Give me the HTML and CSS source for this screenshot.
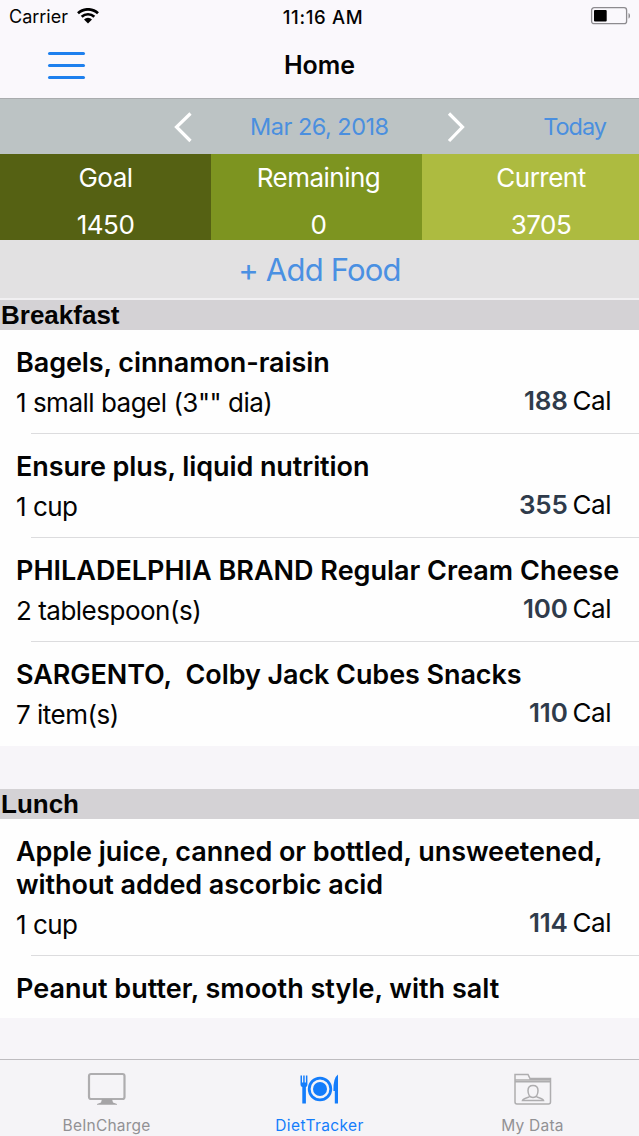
FILE: index.html
```html
<!DOCTYPE html>
<html lang="en">
  <head>
    <meta charset="UTF-8" />
    <meta name="viewport" content="width=device-width, initial-scale=1.0" />
    <title>Home</title>
    <link rel="stylesheet" href="styles.css">
  </head>
  <body>
    <header class="top">
      <div class="status">
        <div class="carrier">
          <span>Carrier</span>
          <svg width="22" height="16" viewBox="0 0 22 16">
            <path d="M1 5.300a14.500 14.500 0 0 1 20 0M4.700 8.800a9.100 9.100 0 0 1 12.600 0" fill="none" stroke="#000" stroke-width="2.700" />
            <path d="M7 11.400a5.800 5.800 0 0 1 8 0l-4 4z" />
          </svg>
        </div>
        <div class="time">11:16 AM</div>
        <div class="battery">
          <svg width="41" height="18" viewBox="0 0 41 18">
            <rect x="1.600" y="0.700" width="35" height="16" rx="2.500" fill="none" stroke="#8d8b8f" stroke-width="1.300" />
            <rect x="4" y="3" width="12.700" height="11.500" rx="1" />
            <path d="M38.500 6c2 .8 2 4.800 0 5.600z" fill="#8d8b8f" />
          </svg>
        </div>
      </div>
      <nav class="navbar">
        <button class="menu"><i></i><i></i><i></i></button>
        <h1>Home</h1>
      </nav>
    </header>
    <div class="datebar">
      <svg class="prev" width="20" height="32" viewBox="0 0 20 32"><path d="M17.500 2.500L3.500 16L17.500 30" /></svg>
      <span class="date">Mar 26, 2018</span>
      <svg class="next" width="20" height="32" viewBox="0 0 20 32"><path d="M3 2.500L16.500 16L3 30" /></svg>
      <span class="today">Today</span>
    </div>
    <div class="totals">
      <div class="goal"><span class="label">Goal</span><span class="num">1450</span></div>
      <div class="remaining"><span class="label">Remaining</span><span class="num">0</span></div>
      <div class="current"><span class="label">Current</span><span class="num">3705</span></div>
    </div>
    <div class="add"><span>+ Add Food</span></div>
    <main class="list">
      <section>
        <h2>Breakfast</h2>
        <div class="food">
          <h3>Bagels, cinnamon-raisin</h3>
          <div class="info"><span>1 small bagel (3"" dia)</span><span class="cal"><b>188</b>Cal</span></div>
        </div>
        <div class="food">
          <h3>Ensure plus, liquid nutrition</h3>
          <div class="info"><span>1 cup</span><span class="cal"><b>355</b>Cal</span></div>
        </div>
        <div class="food">
          <h3 class="wide">PHILADELPHIA BRAND Regular Cream Cheese</h3>
          <div class="info"><span>2 tablespoon(s)</span><span class="cal"><b>100</b>Cal</span></div>
        </div>
        <div class="food">
          <h3>SARGENTO,&nbsp; Colby Jack Cubes Snacks</h3>
          <div class="info"><span>7 item(s)</span><span class="cal"><b>110</b>Cal</span></div>
        </div>
      </section>
      <section>
        <h2>Lunch</h2>
        <div class="food">
          <h3>Apple juice, canned or bottled, unsweetened,<br>without added ascorbic acid</h3>
          <div class="info"><span>1 cup</span><span class="cal"><b>114</b>Cal</span></div>
        </div>
        <div class="food">
          <h3 class="wide">Peanut butter, smooth style, with salt</h3>
          <div class="info"><span></span><span class="cal last">Cal</span></div>
        </div>
      </section>
    </main>
    <footer class="tabs">
      <div class="tab">
        <svg width="40" height="34" viewBox="0 0 40 34">
          <rect x="2" y="2" width="35.500" height="25" rx="2" fill="none" stroke="#aeadaf" stroke-width="2.200" />
          <path d="M15 27h10l1 3.500 4 1.500v.8H10V32l4-1.500z" fill="#a5a4a6" />
        </svg>
        <span>BeInCharge</span>
      </div>
      <div class="tab active">
        <svg width="40" height="34" viewBox="0 0 40 34">
          <g fill="#147dfb">
            <path d="M.5 3.500h1.500v7h1.200v-7h1.500v7h1.200v-7H7.400v9q0 2-1.500 2.500V31.500H2.300V15Q.5 14.500.5 12.500z" />
            <path d="M38 2.500V31.500h-3.200V19H33.400Q33 6 38 2.500z" />
            <circle cx="20" cy="17" r="7" />
          </g>
          <circle cx="20" cy="17" r="10.800" fill="none" stroke="#147dfb" stroke-width="2.800" />
        </svg>
        <span>DietTracker</span>
      </div>
      <div class="tab">
        <svg width="40" height="34" viewBox="0 0 40 34" fill="none" stroke="#aeadaf" stroke-width="1.500">
          <path d="M2 30V2.500h13l2 4h20.500V30q0 2-2 2H4q-2 0-2-2zM2 8h35.500M2 9.800h35.500" />
          <path d="M20 13.500c-3.600 0-5 2-5 5 0 3.500 1.600 7 5 7s5-3.500 5-7c0-3-1.400-5-5-5zM16.500 24.500c-1 1.500-6 1-7 4.100h21c-1-3.100-6-2.600-7-4.100" />
        </svg>
        <span>My Data</span>
      </div>
    </footer>
  </body>
</html>
```
FILE: styles.css
```css
* {
  box-sizing: border-box;
}
html,
body {
  margin: 0;
  padding: 0;
}
body {
  display: flex;
  flex-direction: column;
  height: 1136px;
  overflow: hidden;
  background-color: #f7f5f9;
  color: #030303;
  font-family: Inter, "Liberation Sans", sans-serif;
  white-space: nowrap;
}
h1,
h2,
h3 {
  margin: 0;
}
/* status + nav */
.top {
  height: 99px;
  background-color: #faf8fc;
  border-bottom: 1px solid #a9acae;
}
.status {
  display: grid;
  grid-template-columns: 1fr auto 1fr;
  height: 33px;
  padding: 0 8px 0 9px;
  align-items: center;
  font-size: 18px;
}
.carrier {
  display: flex;
  align-items: center;
  gap: 9px;
}
.carrier svg {
  margin-top: -2px;
}
.time {
  padding-left: 6px;
  font-weight: 500;
  font-size: 18.5px;
  letter-spacing: 0.65px;
}
.battery {
  display: flex;
  justify-content: flex-end;
  margin-top: -2px;
}
.navbar {
  display: grid;
  grid-template-columns: 1fr auto 1fr;
  align-items: center;
  height: 64px;
}
.menu {
  display: flex;
  flex-direction: column;
  gap: 9px;
  width: 37px;
  margin-left: 48px;
  padding: 0;
  border: none;
  background: none;
}
.menu i {
  height: 3px;
  border-radius: 1.5px;
  background-color: #1e80ee;
}
.navbar h1 {
  font-size: 25px;
  font-weight: 600;
}
/* date */
.datebar {
  display: flex;
  align-items: center;
  height: 55px;
  padding: 0 33px 0 173px;
  background-color: #bcc3c4;
  color: #4a8fdf;
  font-size: 23.5px;
  letter-spacing: -0.5px;
}
.datebar svg {
  fill: none;
  stroke: #fff;
  stroke-width: 3.2;
}
.date {
  margin: 0 57px;
}
.today {
  margin-left: auto;
  letter-spacing: -1px;
}
.totals {
  display: grid;
  grid-template-columns: 211px 211px 1fr;
  height: 86px;
  color: #fff;
  font-size: 26px;
  letter-spacing: -0.5px;
}
.totals div {
  display: flex;
  flex-direction: column;
  align-items: center;
  line-height: 47px;
}
.goal {
  background-color: #556113;
}
.remaining {
  background-color: #7d9420;
}
.totals .remaining {
  padding-left: 4px;
}
.current {
  background-color: #adbb40;
}
.totals .current {
  padding-left: 21px;
}
.add {
  height: 60px;
  border-bottom: 2px solid #f1f0f2;
  background-color: #e2e1e2;
  color: #4a90e2;
  font-size: 31px;
  letter-spacing: -0.8px;
  line-height: 60px;
  text-align: center;
}
/* food list */
.list {
  height: 718px;
  overflow: hidden;
}
section {
  margin-bottom: 43px;
}
section h2 {
  height: 30px;
  padding-left: 1px;
  background-color: #d4d2d5;
  font: bold 26px/30px "Liberation Sans", sans-serif;
}
.food {
  position: relative;
  padding: 16px 29px 16px 16px;
  background-color: #fefefe;
}
.food:not(:last-child)::after {
  content: "";
  position: absolute;
  right: 0;
  bottom: 0;
  left: 31px;
  height: 1px;
  background-color: #dcdcde;
}
.food h3 {
  font-size: 27px;
  font-weight: 600;
  letter-spacing: -0.08px;
  line-height: 33px;
}
.food .wide {
  letter-spacing: 0;
}
.info {
  display: flex;
  justify-content: space-between;
  height: 32px;
  margin-top: 7px;
  font-size: 26px;
  letter-spacing: -0.5px;
  line-height: 34px;
}
.cal {
  line-height: 30px;
}
.cal b {
  margin-right: 5px;
  color: #2f3b4b;
  font-weight: 600;
  letter-spacing: -0.2px;
}
.cal:not(.last) {
  margin-right: -1px;
}
.cal.last {
  line-height: 32px;
}
/* tab bar */
.tabs {
  display: grid;
  grid-template-columns: 1fr 1fr 1fr;
  height: 77px;
  margin-top: auto;
  border-top: 1px solid #bebcc0;
  background-color: #f5f4f7;
}
.tab {
  display: flex;
  flex-direction: column;
  align-items: center;
  padding-top: 12px;
  color: #929194;
  font-size: 15.5px;
  letter-spacing: 0.2px;
}
.tab span {
  line-height: 20px;
  margin-top: 10px;
}
.active {
  color: #147dfb;
  letter-spacing: 0.4px;
}
```
